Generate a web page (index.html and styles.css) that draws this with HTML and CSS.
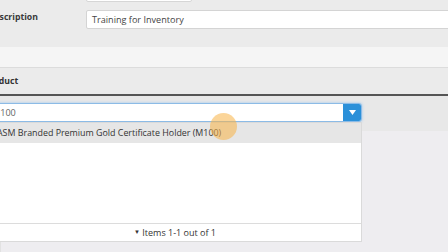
FILE: index.html
```html
<!DOCTYPE html>
<html lang="en">
<head>
    <meta charset="UTF-8">
    <title>Training for Inventory</title>
    <link rel="stylesheet" href="styles.css">
</head>
<body>
    <div class="form-area">
        <div class="prev-field"></div>
        <div class="form-row">
            <label class="form-label">Description</label>
            <div class="text-input">Training for Inventory</div>
        </div>
    </div>
    <div class="spacer-band"></div>
    <div class="grid-header">Product</div>
    <div class="grid-body">
        <div class="edit-row">
            <div class="combo">
                <div class="combo-value">M100</div>
                <div class="combo-btn">
                    <svg width="7" height="5" viewBox="0 0 7 5"><path d="M0 0h7L3.5 5z" fill="#fff"/></svg>
                </div>
            </div>
            <div class="popup">
                <div class="popup-item hover">ASM Branded Premium Gold Certificate Holder (M100)</div>
                <div class="popup-empty"></div>
                <div class="popup-footer"><span class="pager-arrow">&#9660;</span> Items <b>1-1</b> out of <b>1</b></div>
            </div>
        </div>
        <div class="lower-panel"></div>
    </div>
    <div class="cursor-dot"></div>
</body>
</html>
```

FILE: styles.css
```css
body {
    margin: 0;
    width: 448px;
    height: 252px;
    overflow: hidden;
    position: relative;
    background: #ebebeb;
    font-family: "Open Sans", "Liberation Sans", sans-serif;
    color: #333;
}
.form-area {
    height: 47px;
    background: #ebebeb;
    position: relative;
}
.prev-field {
    position: absolute;
    left: 86px;
    top: -10px;
    width: 104px;
    height: 10px;
    background: #fff;
    border: 1px solid #d6d6d6;
    border-radius: 2px;
}
.form-row {
    display: flex;
    align-items: center;
    padding-top: 10px;
}
.form-label {
    width: 86px;
    margin-left: -12px;
    margin-top: -6px;
    font-size: 8.7px;
    font-weight: bold;
    color: #3a3a3a;
    flex: none;
}
.text-input {
    flex: 1;
    height: 17px;
    line-height: 17px;
    margin-left: 12px;
    margin-right: -10px;
    padding-left: 5px;
    background: #fff;
    border: 1px solid #d4d4d4;
    border-radius: 2px;
    font-size: 9.1px;
    color: #444;
}
.spacer-band {
    height: 20px;
    background: #f5f5f5;
    border-bottom: 1px solid #dcdcdc;
}
.grid-header {
    height: 26px;
    line-height: 26px;
    margin-left: -16px;
    font-size: 8.7px;
    font-weight: bold;
    color: #333;
    background: #ebebeb;
    border-bottom: 2px solid #555;
}
.grid-body {
    height: 160px;
}
.edit-row {
    position: relative;
    height: 35px;
    background: #e8e8e8;
    padding-top: 7px;
    box-sizing: border-box;
}
.combo {
    display: flex;
    margin-left: -12px;
    width: 374px;
    height: 19px;
    box-sizing: border-box;
    background: #fff;
    border: 1px solid #8cbbe6;
    border-radius: 3px;
    box-shadow: 0 0 3px #9cc6ee;
}
.combo-value {
    flex: 1;
    line-height: 17px;
    padding-left: 3px;
    font-size: 9.1px;
    color: #666;
}
.combo-btn {
    width: 18px;
    display: flex;
    align-items: center;
    justify-content: center;
    background: #2b90d9;
    border-radius: 0 2px 2px 0;
}
.popup {
    position: absolute;
    left: -12px;
    top: 26px;
    width: 374px;
    height: 120px;
    background: #fff;
    border: 1px solid #dadada;
    box-sizing: border-box;
    display: flex;
    flex-direction: column;
    z-index: 2;
}
.popup-item {
    height: 20px;
    line-height: 20px;
    padding-left: 8px;
    font-size: 8.9px;
    color: #333;
    white-space: nowrap;
}
.popup-item.hover {
    background: #e6e6e6;
}
.popup-empty {
    flex: 1;
}
.popup-footer {
    height: 17px;
    line-height: 17px;
    border-top: 1px solid #dcdcdc;
    text-align: center;
    font-size: 9px;
    color: #333;
}
.popup-footer b {
    font-weight: normal;
}
.pager-arrow {
    font-size: 6px;
    vertical-align: 2px;
}
.lower-panel {
    height: 125px;
    background: #eeedf0;
    border-left: 1px solid #e2e2e2;
}
.cursor-dot {
    position: absolute;
    left: 210px;
    top: 113px;
    width: 27px;
    height: 27px;
    border-radius: 50%;
    background: rgba(247, 178, 70, 0.55);
    z-index: 3;
}
```
